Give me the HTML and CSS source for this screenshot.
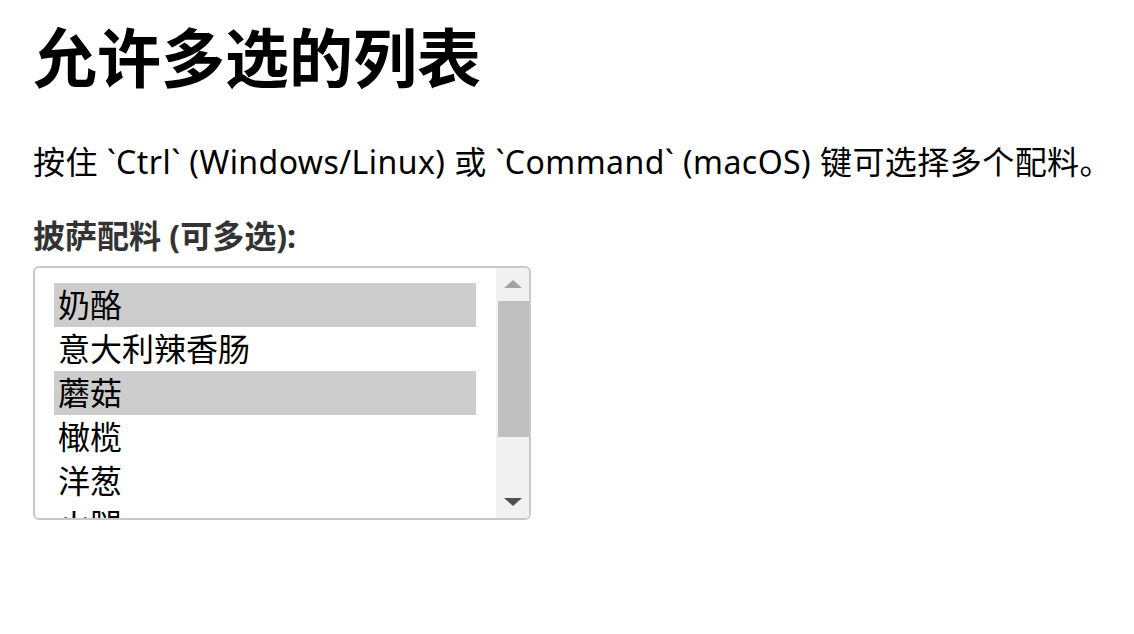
FILE: index.html
```html
<!DOCTYPE html>
<html lang="zh-CN">
<head>
    <meta charset="UTF-8">
    <meta name="viewport" content="width=device-width, initial-scale=1.0">
    <title>允许多选的列表</title>
    <link rel="stylesheet" href="styles.css">
</head>
<body>
    <main class="page">
        <h1 class="title">允许多选的列表</h1>
        <p class="hint">按住 `Ctrl` (Windows/Linux) 或 `Command` (macOS) 键可选择多个配料。</p>
        <label class="field-label" id="toppingsLabel">披萨配料 (可多选):</label>
        <div class="list-frame">
            <div class="list-box" role="listbox" aria-multiselectable="true" aria-labelledby="toppingsLabel">
                <div class="list-option selected" role="option" aria-selected="true">奶酪</div>
                <div class="list-option" role="option" aria-selected="false">意大利辣香肠</div>
                <div class="list-option selected" role="option" aria-selected="true">蘑菇</div>
                <div class="list-option" role="option" aria-selected="false">橄榄</div>
                <div class="list-option" role="option" aria-selected="false">洋葱</div>
                <div class="list-option" role="option" aria-selected="false">火腿</div>
                <div class="list-option" role="option" aria-selected="false">青椒</div>
            </div>
            <div class="scrollbar" aria-hidden="true">
                <div class="scroll-btn">
                    <svg width="18" height="8" viewBox="0 0 18 8"><path d="M0 8 9 0 18 8z" fill="#a3a3a3"/></svg>
                </div>
                <div class="scroll-track">
                    <div class="scroll-thumb"></div>
                </div>
                <div class="scroll-btn">
                    <svg width="18" height="8" viewBox="0 0 18 8"><path d="M0 0 9 8 18 0z" fill="#505050"/></svg>
                </div>
            </div>
        </div>
    </main>
</body>
</html>
```

FILE: styles.css
```css
body {
    margin: 0;
    font-family: 'Noto Sans', 'Noto Sans CJK SC', sans-serif;
    color: #000;
    background-color: #fff;
}
.page {
    padding: 18px 20px 18px 33px;
    display: flex;
    flex-direction: column;
    align-items: flex-start;
}
.title {
    margin: 0;
    font-size: 64px;
    line-height: 80px;
    font-weight: 700;
}
.hint {
    margin: 42px 0 0;
    font-size: 32px;
    line-height: 44px;
    letter-spacing: 0.45px;
    white-space: nowrap;
}
.field-label {
    margin-top: 32px;
    font-size: 32px;
    line-height: 40px;
    font-weight: 700;
    color: #333;
}
.list-frame {
    box-sizing: border-box;
    margin-top: 10px;
    width: 498px;
    height: 254px;
    border: 2px solid #c8c8c8;
    border-radius: 6px;
    display: flex;
    overflow: hidden;
    background-color: #fff;
}
.list-box {
    flex: 1;
    overflow: hidden;
    padding: 15px 20px 0 19px;
}
.list-option {
    height: 44px;
    line-height: 43px;
    padding: 0 4px;
    font-size: 32px;
    white-space: nowrap;
    cursor: default;
}
.list-option.selected {
    background-color: #cdcdcd;
}
.scrollbar {
    width: 33px;
    display: flex;
    flex-direction: column;
    background-color: #f1f1f1;
}
.scroll-btn {
    height: 32px;
    display: flex;
    align-items: center;
    justify-content: center;
}
.scroll-btn svg {
    display: block;
}
.scroll-track {
    flex: 1;
    padding-top: 1px;
}
.scroll-thumb {
    height: 136px;
    margin-left: 2px;
    background-color: #bfbfbf;
}
```
